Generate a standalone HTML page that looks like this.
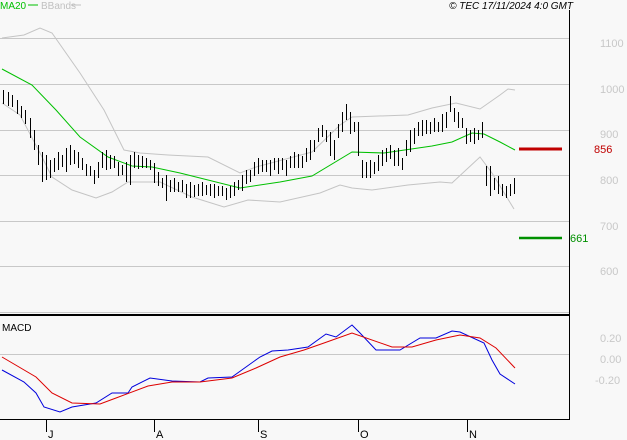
<!DOCTYPE html>
<html><head><meta charset="utf-8"><style>
html,body{margin:0;padding:0;background:#f8f8f8;}
svg{display:block;}
text{font-family:"Liberation Sans",sans-serif;}
</style></head><body>
<svg width="627" height="440" viewBox="0 0 627 440" xmlns="http://www.w3.org/2000/svg">
<rect width="627" height="440" fill="#f8f8f8"/>
<g stroke="#c8c8c8" stroke-width="1">
<path d="M0 38.5H569M0 84.5H569M0 130.5H569M0 175.5H569M0 221.5H569M0 266.5H569M0 312.5H569M0 354.5H569"/>
</g>
<path d="M569.5 10V420M0 419.5H570" stroke="#000" stroke-width="1" fill="none"/>
<path d="M0 315H569" stroke="#000" stroke-width="2"/>
<g stroke="#000" stroke-width="1"><path d="M46.5 420V432M154.5 420V432M258.5 420V432M358.5 420V432M467.5 420V432"/></g>
<g font-size="11" fill="#000"><text x="48" y="438">J</text><text x="156" y="438">A</text><text x="260" y="438">S</text><text x="360" y="438">O</text><text x="469" y="438">N</text></g>
<g font-size="11" fill="#c8c8c8"><text x="600" y="47">1100</text><text x="600" y="93">1000</text><text x="600" y="138">900</text><text x="600" y="184">800</text><text x="600" y="230">700</text><text x="600" y="275">600</text><text x="600" y="342">0.20</text><text x="600" y="363">0.00</text><text x="595" y="384">-0.20</text></g>
<g font-size="10"><text x="0" y="9" fill="#00c000">MA20</text><path d="M28 5H38" stroke="#00c000"/><text x="41" y="9" fill="#c0c0c0">BBands</text><path d="M71 5H81" stroke="#c0c0c0"/>
<text x="573" y="9" text-anchor="end" font-style="italic" fill="#000">© TEC 17/11/2024 4:0 GMT</text>
<text x="2" y="331" fill="#000">MACD</text></g>
<polyline fill="none" stroke="#c4c4c4" points="2,38 24,35 40,28 52,33 80,73 104,110 124,150 140,153 168,155 208,157 240,173 256,167 312,152 340,125 352,117 408,115 432,108 456,103 480,109 500,95 508,89 515,90"/>
<polyline fill="none" stroke="#c4c4c4" points="2,103 20,115 40,153 52,177 72,190 96,198 112,192 128,182 160,182 192,197 224,207 248,200 280,202 320,193 340,185 352,188 372,190 408,185 440,182 452,183 480,157 492,173 514,209"/>
<polyline fill="none" stroke="#00c000" points="2,69 32,85 56,110 80,137 108,157 132,166 152,167 180,173 240,188 280,182 312,176 352,152 384,153 432,146 452,142 472,133 484,134 500,142 515,150"/>
<g stroke="#000" stroke-width="1" fill="none">
<path d="M3.5 90v14M8.5 92v14M12.5 95v12M17.5 100v14M21.5 106v12M25.5 110v14M30.5 118v20M34.5 130v20M38.5 145v20M42.5 152v30M46.5 155v25M50.5 160v18M54.5 158v14M58.5 152v18M62.5 155v12M66.5 148v24M70.5 145v20M74.5 150v14M78.5 152v16M82.5 158v12M86.5 164v12M90.5 166v10M94.5 170v14M98.5 162v16M102.5 152v16M106.5 150v20M110.5 155v14M114.5 156v12M118.5 162v14M122.5 165v10M126.5 162v20M130.5 155v30M134.5 152v16M138.5 155v14M142.5 156v12M146.5 158v10M150.5 160v10M154.5 163v20M158.5 172v14M162.5 178v10M166.5 175v26M170.5 180v12M174.5 178v14M178.5 182v10M182.5 180v12M186.5 184v14M190.5 182v16M194.5 185v12M198.5 184v12M202.5 182v14M206.5 185v10M210.5 184v12M214.5 184v14M218.5 186v10M222.5 186v10M226.5 188v12M230.5 186v12M234.5 182v14M238.5 180v10M242.5 175v16M246.5 170v14M250.5 170v12M254.5 162v14M258.5 158v16M262.5 160v12M266.5 160v12M270.5 160v16M274.5 158v12M278.5 158v16M282.5 158v12M286.5 160v16M290.5 156v12M294.5 152v16M298.5 154v14M302.5 156v12M306.5 148v14M310.5 140v20M314.5 140v12M318.5 128v14M322.5 125v12M326.5 130v12M330.5 132v24M334.5 140v20M338.5 124v14M342.5 112v20M346.5 104v16M350.5 112v22M354.5 122v10M358.5 122v34M362.5 160v18M366.5 162v16M370.5 160v18M374.5 162v12M378.5 155v16M382.5 150v16M386.5 148v14M390.5 145v14M394.5 150v16M398.5 148v18M402.5 158v12M406.5 140v16M410.5 130v22M414.5 128v16M418.5 122v14M422.5 120v16M426.5 120v14M430.5 122v12M434.5 118v14M438.5 122v10M442.5 114v18M446.5 112v16M450.5 96v16M454.5 108v14M458.5 112v16M462.5 118v10M466.5 128v16M470.5 130v12M474.5 128v16M478.5 130v10M482.5 122v16M486.5 166v20M490.5 166v30M494.5 178v12M498.5 176v18M502.5 184v12M506.5 186v12M510.5 184v12M514.5 178v16"/>
</g>
<path d="M519 149H562" stroke="#c00000" stroke-width="3"/>
<text x="594" y="153" font-size="11" fill="#c00000">856</text>
<path d="M519 238H562" stroke="#009000" stroke-width="2.5"/>
<text x="570" y="242" font-size="11" fill="#009000">661</text>
<polyline fill="none" stroke="#0000dd" points="2,370 24,382 36,393 44,407 60,412 72,407 96,403 112,393 128,393 132,387 150,378 172,381 200,382 208,378 232,377 260,357 272,351 288,350 308,347 326,334 336,337 352,325 360,333 376,350 400,350 420,338 436,338 452,331 460,332 484,343 492,360 500,374 515,384"/>
<polyline fill="none" stroke="#dd0000" points="2,357 36,377 52,393 72,403 100,404 116,398 148,386 172,382 200,382 232,378 256,368 280,357 304,350 324,343 352,333 392,347 412,347 436,340 460,335 480,338 496,348 515,368"/>
</svg>
</body></html>
